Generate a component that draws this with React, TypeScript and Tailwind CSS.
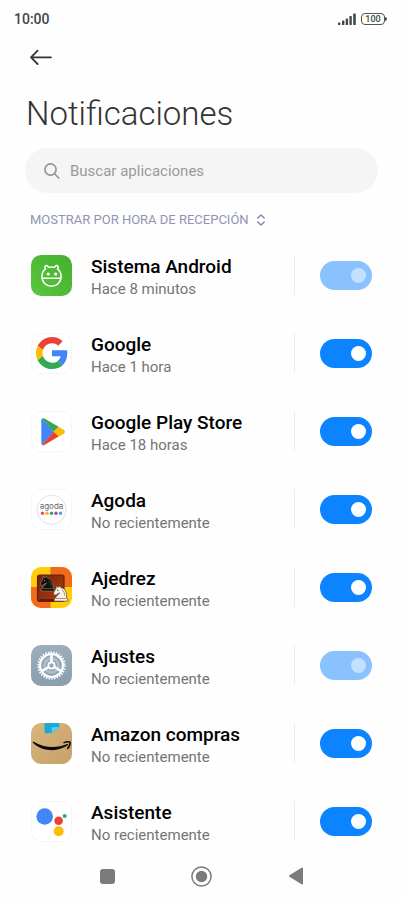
import type { ReactNode } from "react";

function AndroidIcon() {
  return (
    <svg viewBox="0 0 41 41" className="size-full">
      <defs>
        <linearGradient id="android" x1="1" y1="0" x2="0" y2="1">
          <stop offset="0" stopColor="#43b02c" />
          <stop offset="1" stopColor="#5bc63f" />
        </linearGradient>
      </defs>
      <rect width="41" height="41" fill="url(#android)" />
      <g fill="none" stroke="#fff" strokeWidth="1.5" strokeLinecap="round" strokeLinejoin="round">
        <path d="M10.9 21.5C10.9 18 12.4 15.4 14.6 13.8C13 12.4 14 10.4 15.6 10.6C16.8 10.8 17 11.7 17.5 12.4Q20.5 11.6 23.5 12.4C24 11.7 24.2 10.8 25.4 10.6C27 10.4 28 12.4 26.4 13.8C28.6 15.4 30.1 18 30.1 21.5A9.6 9.8 0 0 1 10.9 21.5Z" />
        <path d="M11 23.3H30" />
      </g>
      <circle cx="17.2" cy="19" r="1.6" fill="#fff" />
      <circle cx="24.6" cy="19" r="1.6" fill="#fff" />
    </svg>
  );
}

function GoogleIcon() {
  return (
    <svg viewBox="0 0 48 48" className="size-8">
      <path fill="#ea4335" d="M24 9.5c3.54 0 6.71 1.22 9.21 3.6l6.85-6.85C35.9 2.38 30.47 0 24 0 14.62 0 6.51 5.38 2.56 13.22l7.98 6.19C12.43 13.72 17.74 9.5 24 9.5z" />
      <path fill="#4285f4" d="M46.98 24.55c0-1.57-.15-3.09-.38-4.55H24v9.02h12.94c-.58 2.96-2.26 5.48-4.78 7.18l7.73 6c4.51-4.18 7.09-10.36 7.09-17.65z" />
      <path fill="#fbbc05" d="M10.53 28.59c-.48-1.45-.76-2.99-.76-4.59s.27-3.14.76-4.59l-7.98-6.19C.92 16.46 0 20.12 0 24c0 3.88.92 7.54 2.56 10.78l7.97-6.19z" />
      <path fill="#34a853" d="M24 48c6.48 0 11.93-2.13 15.89-5.81l-7.73-6c-2.15 1.45-4.92 2.3-8.16 2.3-6.26 0-11.57-4.22-13.47-9.91l-7.98 6.19C6.51 42.62 14.62 48 24 48z" />
    </svg>
  );
}

function PlayIcon() {
  return (
    <svg viewBox="0 0 41 41" className="size-full">
      <path fill="#4285f4" d="M10.3 9.2V32.2C10.3 33 10.6 33.6 11.1 33.9L22.8 20.7L11.1 7.4C10.6 7.8 10.3 8.4 10.3 9.2Z" />
      <path fill="#34a853" d="M11 7.5C11.7 7 12.6 7 13.5 7.5L27.6 15.8L22.6 20.7Z" />
      <path fill="#fbbc04" d="M27.5 15.7L32.7 18.7C34.3 19.7 34.3 21.7 32.7 22.7L27.5 25.7L22.2 20.7Z" />
      <path fill="#ea4335" d="M11 33.9C11.7 34.4 12.6 34.4 13.5 33.9L27.6 25.6L22.6 20.7Z" />
    </svg>
  );
}

function AgodaIcon() {
  return (
    <svg viewBox="0 0 41 41" className="size-full">
      <circle cx="20.5" cy="20.8" r="14.6" fill="#fff" stroke="#d8d8d8" strokeWidth="0.8" />
      <text x="20.5" y="20.4" textAnchor="middle" fontSize="8" fill="#666" className="font-['Inter',sans-serif]">agoda</text>
      <circle cx="11.5" cy="24.3" r="1.7" fill="#ed4c58" />
      <circle cx="16" cy="24.3" r="1.7" fill="#f5b13d" />
      <circle cx="20.5" cy="24.3" r="1.7" fill="#32a35c" />
      <circle cx="25" cy="24.3" r="1.7" fill="#a44fae" />
      <circle cx="29.5" cy="24.3" r="1.7" fill="#3fa9de" />
    </svg>
  );
}

function Knight({ x, y, size, fill, stroke }: { x: number; y: number; size: number; fill: string; stroke: string }) {
  return (
    <svg x={x} y={y} width={size} height={size} viewBox="0 0 24 24">
      <path
        d="M5 18.5C5.5 15.5 8.5 14 11 11.2C8.8 12.3 7.4 12.2 6.5 13.8L4.2 14.6L2 12.4C2.4 9.4 4.8 7.2 5.8 4.4L5.8 1.2L8.8 3.4L10.8 1L12.4 3.8C18.5 4.6 21.4 9.5 20.4 18.5L22.4 19.6V22.8H3V19.6Z"
        fill={fill}
        stroke={stroke}
        strokeWidth="0.9"
        strokeLinejoin="round"
      />
      <path d="M5.5 19H20M14 6.8C16.6 8.4 18 11.4 17.6 15" fill="none" stroke={stroke} strokeWidth="0.7" />
      <circle cx="8.2" cy="7.4" r="0.9" fill={stroke} />
    </svg>
  );
}

function ChessIcon() {
  return (
    <svg viewBox="0 0 41 41" className="size-full">
      <defs>
        <linearGradient id="board" x1="0" y1="0" x2="1" y2="1">
          <stop offset="0" stopColor="#6b2109" />
          <stop offset="1" stopColor="#b8400e" />
        </linearGradient>
      </defs>
      <rect width="41" height="41" fill="#ffce08" />
      <path fill="#f36a1b" d="M19.5 0H41V20H19.5ZM0 20H19.5V41H0Z" />
      <rect x="6.5" y="8" width="26.5" height="26.5" rx="2" fill="url(#board)" stroke="#641e08" strokeWidth="1.2" />
      <path d="M8.5 33H31.5" stroke="#4b1405" strokeWidth="1.4" />
      <Knight x={8} y={8.5} size={16.5} fill="#141110" stroke="#a58a6a" />
      <Knight x={21} y={18} size={17} fill="#f7f1e6" stroke="#4a3428" />
    </svg>
  );
}

function SettingsIcon() {
  return (
    <svg viewBox="0 0 41 41" className="size-full">
      <defs>
        <linearGradient id="settings" x1="0" y1="0" x2="0" y2="1">
          <stop offset="0" stopColor="#9aaebb" />
          <stop offset="1" stopColor="#8b9eac" />
        </linearGradient>
      </defs>
      <rect width="41" height="41" fill="url(#settings)" />
      <circle cx="20.5" cy="20.5" r="7" fill="none" stroke="#b1bfc9" strokeWidth="2.6" />
      <g fill="none" stroke="#fff">
        <circle cx="20.5" cy="20.5" r="11.4" strokeWidth="2" />
        <circle cx="20.5" cy="20.5" r="13" strokeWidth="2.4" strokeDasharray="1.45 1.273" />
        <circle cx="20.5" cy="20.5" r="3.1" strokeWidth="1.9" />
        <path strokeWidth="2.6" d="M20.5 17.4V9.3M17.8 22L10.8 26.1M23.2 22L30.2 26.1" />
      </g>
    </svg>
  );
}

function AmazonIcon() {
  return (
    <svg viewBox="0 0 41 41" className="size-full">
      <defs>
        <linearGradient id="parcel" x1="0" y1="0" x2="1" y2="1">
          <stop offset="0" stopColor="#d8b67c" />
          <stop offset="1" stopColor="#c6a16a" />
        </linearGradient>
      </defs>
      <rect width="41" height="41" fill="url(#parcel)" />
      <path fill="#1ba9d9" d="M13.5 0H28.2V3.9L20.7 10.8L18.8 9.6L16.7 10.8L13.5 9.5Z" />
      <path fill="#5bcdf0" d="M20.7 4.3L28.2 3.9L20.7 10.8Z" />
      <path fill="#0c0b0a" d="M2.2 19.9C1.3 19.4 1.8 18.3 2.8 18.8C12.5 25.3 26.5 25.5 36.2 21.1C37.3 20.6 37.7 21.8 36.8 22.3C26.5 29.5 11.5 28.6 2.2 19.9Z" />
      <path fill="none" stroke="#0c0b0a" strokeWidth="1.5" strokeLinecap="round" strokeLinejoin="round" d="M33 19.6C35 18.7 37.5 18.4 39.1 19.1C39.3 21.2 38.2 23.9 36.6 25.4" />
    </svg>
  );
}

function AssistantIcon() {
  return (
    <svg viewBox="0 0 41 41" className="size-full">
      <circle cx="13.7" cy="15.5" r="8.3" fill="#4285f4" />
      <circle cx="27.6" cy="19.7" r="4.3" fill="#ea4335" />
      <circle cx="33.7" cy="15" r="2" fill="#34a853" />
      <circle cx="27.7" cy="30.2" r="5" fill="#fbbc05" />
    </svg>
  );
}

type App = { name: string; when: string; icon: ReactNode; framed?: boolean; locked?: boolean };

const apps: App[] = [
  { name: "Sistema Android", when: "Hace 8 minutos", icon: <AndroidIcon />, locked: true },
  { name: "Google", when: "Hace 1 hora", icon: <GoogleIcon />, framed: true },
  { name: "Google Play Store", when: "Hace 18 horas", icon: <PlayIcon />, framed: true },
  { name: "Agoda", when: "No recientemente", icon: <AgodaIcon />, framed: true },
  { name: "Ajedrez", when: "No recientemente", icon: <ChessIcon /> },
  { name: "Ajustes", when: "No recientemente", icon: <SettingsIcon />, locked: true },
  { name: "Amazon compras", when: "No recientemente", icon: <AmazonIcon /> },
  { name: "Asistente", when: "No recientemente", icon: <AssistantIcon />, framed: true },
];

function AppRow({ app, id }: { app: App; id: string }) {
  return (
    <li className="flex h-[78px] items-center">
      <div
        className={`flex size-[41px] shrink-0 items-center justify-center overflow-hidden rounded-[10px] ${
          app.framed ? "bg-white ring-1 ring-[#f6f6f6] ring-inset" : ""
        }`}
      >
        {app.icon}
      </div>
      <label htmlFor={id} className="ml-[19px] min-w-0 flex-1 pt-1">
        <span className="block text-[19px] leading-6 font-medium text-black">{app.name}</span>
        <span className="block text-[15px] leading-5 text-[#757575]">{app.when}</span>
      </label>
      <div className="h-10 w-px bg-[#ebebeb]" />
      <input
        id={id}
        type="checkbox"
        defaultChecked
        disabled={app.locked}
        className="ml-[25px] flex h-[29px] w-[52px] shrink-0 appearance-none items-center rounded-full bg-[#d9d9d9] px-[6px] before:size-[15px] before:rounded-full before:bg-white before:content-[''] checked:justify-end checked:bg-[#0d84ff] disabled:checked:bg-[#8ac2ff] disabled:before:bg-[#c2e0ff]"
      />
    </li>
  );
}

export default function App() {
  return (
    <div className="flex min-h-screen flex-col bg-[#fefefe] font-['Roboto',sans-serif] text-[#333]">
      <header>
        <div className="flex h-9 items-center justify-between pt-0.5 pr-4 pl-[14px]">
          <span className="text-[14px] leading-5 font-medium text-[#444]">10:00</span>
          <div className="flex items-center gap-[5px]">
            <svg viewBox="0 0 18 12" className="h-3 w-[18px]" fill="#484848">
              <rect x="0" y="9.5" width="2.4" height="2.5" rx="0.6" />
              <rect x="4" y="7.5" width="2.4" height="4.5" rx="0.6" />
              <rect x="7.7" y="5.4" width="2.4" height="6.6" rx="0.6" />
              <rect x="11.4" y="3" width="2.4" height="9" rx="0.6" />
              <rect x="15.2" y="0.4" width="2.6" height="11.6" rx="0.6" />
            </svg>
            <div className="flex items-center">
              <div className="flex h-3 w-6 items-center justify-center rounded-[4px] border border-[#555] text-[9px] leading-none font-medium text-[#444]">
                100
              </div>
              <div className="h-1 w-[2px] rounded-r-full bg-[#555]" />
            </div>
          </div>
        </div>
        <button type="button" aria-label="Atrás" className="ml-[29px] block h-[42px] w-6">
          <svg viewBox="0 0 24 42" className="h-[42px] w-6" fill="none" stroke="#333" strokeWidth="1.8" strokeLinecap="round" strokeLinejoin="round">
            <path d="M22 21.3H2M8.6 14.6L2 21.3L8.6 28" />
          </svg>
        </button>
        <h1 className="mt-4 pl-[26px] text-[33px] leading-10 font-light">Notificaciones</h1>
      </header>

      <main className="flex-1">
        <label className="mx-[25px] mt-[14px] flex h-[45px] items-center rounded-full bg-[#f5f5f5] pl-[19px]">
          <svg viewBox="0 0 16 16" className="size-4 shrink-0" fill="none" stroke="#919191" strokeWidth="1.6" strokeLinecap="round">
            <circle cx="6.5" cy="6.5" r="5.6" />
            <path d="M10.6 10.8L14.8 15" />
          </svg>
          <input
            type="text"
            aria-label="Buscar aplicaciones"
            placeholder="Buscar aplicaciones"
            className="ml-[10px] min-w-0 flex-1 bg-transparent text-[15px] leading-5 outline-none placeholder:text-[#9a9a9a]"
          />
        </label>

        <button type="button" className="mt-4 ml-[30px] flex h-[22px] items-center gap-2 text-[13px] leading-5 text-[#9094b4]">
          MOSTRAR POR HORA DE RECEPCIÓN
          <svg viewBox="0 0 8 12" className="h-3 w-2" fill="none" stroke="#7f88b0" strokeWidth="1.4" strokeLinecap="round" strokeLinejoin="round">
            <path d="M0.8 4L4 1L7.2 4M0.8 8L4 11L7.2 8" />
          </svg>
        </button>

        <ul className="mt-[5px] px-[31px]">
          {apps.map((app, index) => (
            <AppRow key={app.name} app={app} id={`app-${index}`} />
          ))}
        </ul>
      </main>

      <nav className="flex h-10 items-start justify-center gap-[54px]">
        <button type="button" aria-label="Recientes" className="flex h-8 w-10 items-center justify-center">
          <span className="size-[15px] rounded-[3px] bg-[#7b7b7b]" />
        </button>
        <button type="button" aria-label="Inicio" className="flex h-8 w-10 items-center justify-center">
          <svg viewBox="0 0 21 21" className="size-[21px]">
            <circle cx="10.5" cy="10.5" r="9.6" fill="none" stroke="#7b7b7b" strokeWidth="1.5" />
            <circle cx="10.5" cy="10.5" r="5.7" fill="#7b7b7b" />
          </svg>
        </button>
        <button type="button" aria-label="Atrás" className="flex h-8 w-10 items-center justify-center">
          <svg viewBox="0 0 14 18" className="h-[18px] w-[14px]" fill="#7b7b7b">
            <path d="M0.4 8.3L12.6 0.7Q14 0 14 1.4V16.6Q14 18 12.6 17.3L0.4 9.7Q-0.4 9 0.4 8.3Z" />
          </svg>
        </button>
      </nav>
    </div>
  );
}
